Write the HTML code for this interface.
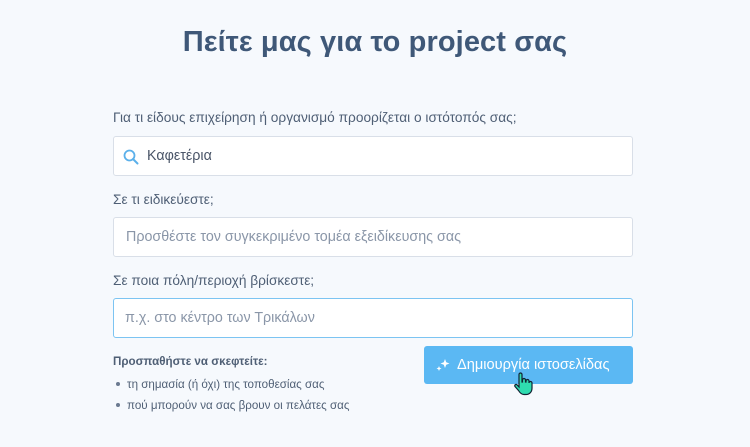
<!DOCTYPE html>
<html><head><meta charset="utf-8"><style>
body{margin:0;width:750px;height:447px;background:#f6f9fd;font-family:"Liberation Sans","Noto Sans CJK SC",sans-serif;position:relative;overflow:hidden;color:#4a5b73}
.t{position:absolute;left:0;width:750px;top:26px;text-align:center;font-size:29px;font-weight:bold;color:#3f5878;letter-spacing:0.1px}
.l{position:absolute;left:113px;font-size:13.7px;color:#4f5f75}
.i{position:absolute;left:113px;width:518px;height:38px;background:#fff;border:1px solid #d9dfe8;border-radius:3px;font-size:14.3px;color:#4a5568;line-height:38px;box-sizing:content-box}
.ph{color:#8a96a8}
.btn{position:absolute;left:424px;top:346px;width:209px;height:38px;background:#5bb8f3;border-radius:3px;color:#fff;font-size:14.6px;line-height:38px}
.h{position:absolute;left:113px;font-size:11.6px;color:#4f5f75}
.dot{display:inline-block;width:4px;height:4px;border-radius:50%;background:#6b7a90;margin:0 7px 2px 3px}
</style></head><body>
<div class="t">Πείτε μας για το project σας</div>
<div class="l" style="top:110px">Για τι είδους επιχείρηση ή οργανισμό προορίζεται ο ιστότοπός σας;</div>
<div class="i" style="top:136px"><svg style="position:absolute;left:9px;top:12px" width="16" height="16" viewBox="0 0 16 16"><circle cx="6.5" cy="6.5" r="5" fill="none" stroke="#5bb0ea" stroke-width="1.8"/><path d="M10 10l4.5 4.5" stroke="#5bb0ea" stroke-width="2" stroke-linecap="round"/></svg><span style="position:absolute;left:33px">Καφετέρια</span></div>
<div class="l" style="top:192px">Σε τι ειδικεύεστε;</div>
<div class="i" style="top:217px"><span class="ph" style="position:absolute;left:12px">Προσθέστε τον συγκεκριμένο τομέα εξειδίκευσης σας</span></div>
<div class="l" style="top:273px">Σε ποια πόλη/περιοχή βρίσκεστε;</div>
<div class="i" style="top:298px;border-color:#7cc4f2"><span class="ph" style="position:absolute;left:11px">π.χ. στο κέντρο των Τρικάλων</span></div>
<div class="h" style="top:355px;font-weight:bold">Προσπαθήστε να σκεφτείτε:</div>
<div class="h" style="top:378px"><span class="dot"></span>τη σημασία (ή όχι) της τοποθεσίας σας</div>
<div class="h" style="top:399px"><span class="dot"></span>πού μπορούν να σας βρουν οι πελάτες σας</div>
<div class="btn"><svg style="position:absolute;left:12px;top:13px" width="14" height="12" viewBox="0 0 14 12"><path d="M9 0l1.2 3.3L13.5 4.5 10.2 5.7 9 9 7.8 5.7 4.5 4.5 7.8 3.3z" fill="#fff"/><path d="M3 7l.7 1.8L5.5 9.5 3.7 10.2 3 12 2.3 10.2.5 9.5 2.3 8.8z" fill="#fff"/></svg><span style="position:absolute;left:33px">Δημιουργία ιστοσελίδας</span></div>
<svg style="position:absolute;left:513px;top:372px" width="20" height="24" viewBox="0 0 20 24"><path d="M6 2.5a1.5 1.5 0 0 1 3 0V10h.5V8a1.5 1.5 0 0 1 3 0v2h.5V9a1.5 1.5 0 0 1 3 0v2a1.5 1.5 0 0 1 3 0v5c0 4-2.5 6.5-6 6.5h-2c-2.5 0-4-1.5-5.5-4L2 14.5c-.8-1.3.8-2.8 2-1.7L6 15z" fill="#2fdcb0" stroke="#123" stroke-width="1.2"/></svg>
</body></html>
